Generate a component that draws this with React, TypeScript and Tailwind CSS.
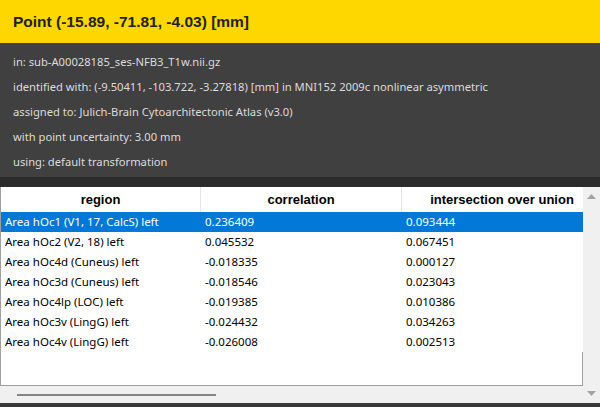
import React from 'react';

const rows = [
  ['Area hOc1 (V1, 17, CalcS) left', '0.236409', '0.093444'],
  ['Area hOc2 (V2, 18) left', '0.045532', '0.067451'],
  ['Area hOc4d (Cuneus) left', '-0.018335', '0.000127'],
  ['Area hOc3d (Cuneus) left', '-0.018546', '0.023043'],
  ['Area hOc4lp (LOC) left', '-0.019385', '0.010386'],
  ['Area hOc3v (LingG) left', '-0.024432', '0.034263'],
  ['Area hOc4v (LingG) left', '-0.026008', '0.002513'],
];

const info = [
  'in: sub-A00028185_ses-NFB3_T1w.nii.gz',
  'identified with: (-9.50411, -103.722, -3.27818) [mm] in MNI152 2009c nonlinear asymmetric',
  'assigned to: Julich-Brain Cytoarchitectonic Atlas (v3.0)',
  'with point uncertainty: 3.00 mm',
  'using: default transformation',
];

function Arrow({ up }: { up?: boolean }) {
  return (
    <svg width="9" height="5" viewBox="0 0 9 5" className="fill-[#a3a3a3]">
      {up ? <path d="M4.5 0 L9 5 L0 5 Z" /> : <path d="M0 0 L9 0 L4.5 5 Z" />}
    </svg>
  );
}

export default function App() {
  const sans = "font-['Noto_Sans',sans-serif]";
  return (
    <div className="flex h-[407px] w-[600px] flex-col overflow-hidden bg-[#2b2b2b]">
      {/* title bar */}
      <div className="flex h-[43px] shrink-0 items-center bg-[#ffd700] px-[13px]">
        <h1 className="font-['Liberation_Sans',Arial,sans-serif] text-[15.5px] font-bold text-[#222]">
          Point (-15.89, -71.81, -4.03) [mm]
        </h1>
      </div>

      {/* details */}
      <div className={`h-[134px] shrink-0 bg-[#404040] px-[13px] pt-[7px] ${sans} text-[11.2px] text-[#dcdcdc]`}>
        {info.map((line) => (
          <div key={line} className="flex h-[25px] items-center whitespace-nowrap">
            {line}
          </div>
        ))}
      </div>

      <div className="h-[10px] shrink-0 bg-[#2b2b2b]" />

      {/* table + scrollbars */}
      <div className="flex h-[216px] shrink-0 bg-[#f0f0f0]">
        <div className="flex w-[583px] flex-col">
          <div className="relative h-[199px] overflow-hidden border-b border-l border-[#a0a0a0] bg-white">
            <div className="w-[800px]">
              <div className="grid h-[25px] grid-cols-[200px_201px_200px] font-['Liberation_Sans',Arial,sans-serif] text-[13px] font-bold text-black">
                <div className="flex items-center justify-center border-r border-[#e5e5e5]">region</div>
                <div className="flex items-center justify-center border-r border-[#e5e5e5]">correlation</div>
                <div className="flex items-center justify-center">intersection over union</div>
              </div>
              {rows.map((r, i) => (
                <div
                  key={r[0]}
                  className={`grid h-[20px] w-[582px] grid-cols-[200px_201px_181px] items-center whitespace-nowrap ${sans} text-[11.5px] ${
                    i === 0 ? 'bg-[#0078d7] text-white' : 'text-black'
                  }`}
                >
                  <div className="pl-[4px]">{r[0]}</div>
                  <div className="pl-[4px]">{r[1]}</div>
                  <div className="pl-[4px]">{r[2]}</div>
                </div>
              ))}
            </div>
            <div className="absolute bottom-0 right-0 h-[33px] w-px bg-[#a0a0a0]" />
          </div>
          {/* horizontal scrollbar */}
          <div className="flex h-[17px] items-center pl-[17px]">
            <div className="h-[2px] w-[199px] bg-[#858585]" />
          </div>
        </div>
        {/* vertical scrollbar */}
        <div className="flex w-[17px] flex-col items-center justify-between pb-[7px] pt-[7px]">
          <Arrow up />
          <Arrow />
        </div>
      </div>

      <div className="h-[4px] shrink-0 bg-[#383838]" />
    </div>
  );
}
